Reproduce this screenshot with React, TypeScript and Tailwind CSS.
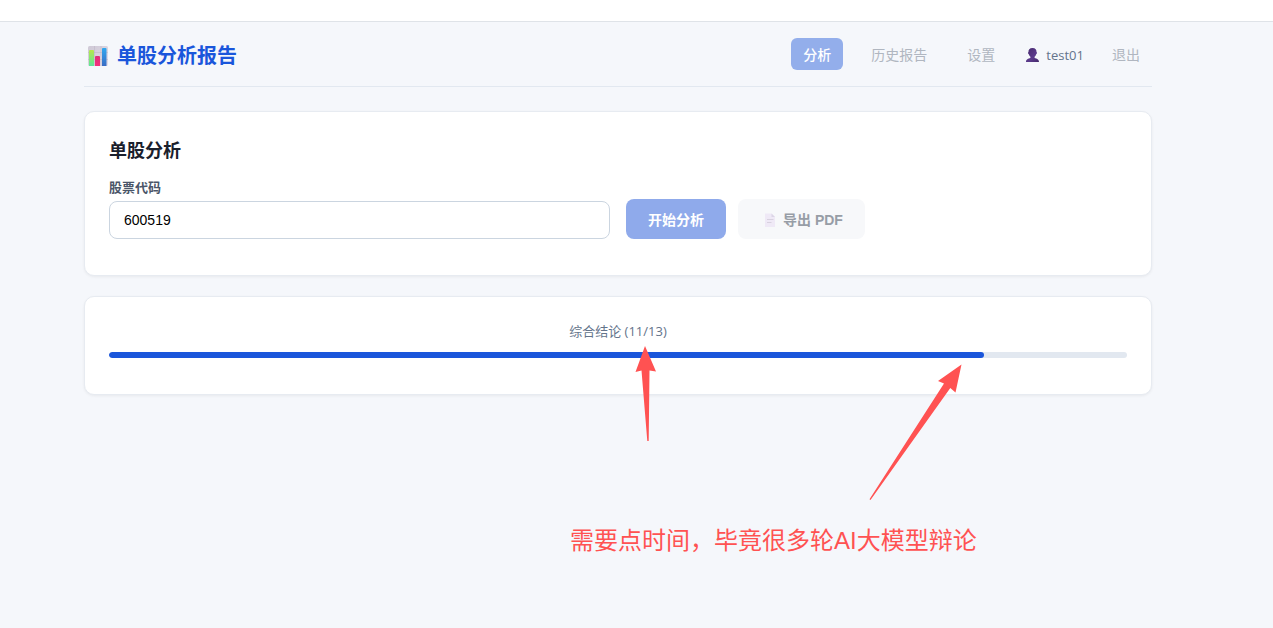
import { useState } from "react";

const navItems = [
  { label: "分析", active: true },
  { label: "历史报告", active: false },
  { label: "设置", active: false },
];

function ChartIcon() {
  return (
    <svg width="21" height="20" viewBox="0 0 21 20" aria-hidden="true">
      <defs>
        <linearGradient id="chartBack" x1="0" y1="0" x2="1" y2="1">
          <stop offset="0" stopColor="#cfc9d6" />
          <stop offset="1" stopColor="#e3dde8" />
        </linearGradient>
        <linearGradient id="chartGreen" x1="0" y1="0" x2="0" y2="1">
          <stop offset="0" stopColor="#b5e84c" />
          <stop offset="1" stopColor="#5fe49a" />
        </linearGradient>
        <linearGradient id="chartRed" x1="0" y1="0" x2="0" y2="1">
          <stop offset="0" stopColor="#dc2f78" />
          <stop offset="1" stopColor="#f52f7c" />
        </linearGradient>
        <linearGradient id="chartBlue" x1="0" y1="0" x2="0" y2="1">
          <stop offset="0" stopColor="#2fa8f0" />
          <stop offset="1" stopColor="#3a6cc4" />
        </linearGradient>
      </defs>
      <rect width="20" height="20" rx="1.5" fill="url(#chartBack)" />
      <path d="M0 6.5H20M0 13.5H20M6.5 0V20M13 0V20" stroke="#b3acbd" strokeWidth="0.4" />
      <path d="M1 20V5Q1 4 2 4H5Q6 4 6 5V20Z" fill="url(#chartGreen)" />
      <path d="M7 20V11Q7 10 8 10H11Q12 10 12 11V20Z" fill="url(#chartRed)" />
      <path d="M14 20V3Q14 2 15 2H17.500Q18.500 2 18.500 3V20Z" fill="url(#chartBlue)" />
    </svg>
  );
}

function UserIcon() {
  return (
    <svg width="19" height="16" viewBox="0 0 19 16" aria-hidden="true">
      <defs>
        <linearGradient id="userFill" x1="0" y1="0" x2="1" y2="1">
          <stop offset="0" stopColor="#45286c" />
          <stop offset="0.6" stopColor="#5b3a8c" />
          <stop offset="1" stopColor="#432869" />
        </linearGradient>
      </defs>
      <path
        d="M9.500 1C12.500 1 13.700 2.800 13.500 5C14.300 5.200 14.100 7 13.200 7.300C12.900 8.500 12.300 9.300 11.600 9.800V11C13.800 11.500 16 12.300 16 15H3C3 12.300 5.200 11.500 7.400 11V9.800C6.700 9.300 6.100 8.500 5.800 7.300C4.900 7 4.700 5.200 5.500 5C5.300 2.800 6.500 1 9.500 1Z"
        fill="url(#userFill)"
      />
    </svg>
  );
}

function PageIcon() {
  return (
    <svg width="19" height="16" viewBox="0 0 19 16" aria-hidden="true">
      <path d="M5 1.500H11.500L15 5V15H5Z" fill="#efe9f6" />
      <path d="M11.500 1.500L15 5H11.500Z" fill="#dcd5e6" />
      <path d="M7 7.500H13.500M7 10.500H11.500" stroke="#d8d1df" />
    </svg>
  );
}

// Hand-drawn style notes lying over the page
function Annotations() {
  return (
    <div className="pointer-events-none absolute inset-0">
      <svg className="absolute left-[635px] top-[345px]" width="22" height="97" viewBox="0 0 22 97" aria-hidden="true">
        <path d="M10 1L21 26.500L14.500 25.500L13.700 96H12.300L6.500 25.500L0.500 27Z" fill="#ff5252" />
      </svg>
      <svg className="absolute left-[869px] top-[364px]" width="93" height="137" viewBox="0 0 93 137" aria-hidden="true">
        <path d="M92.500 0.500L86.500 28.500L81.300 24L1.500 136L0.500 135.300L75 19.500L69 17Z" fill="#ff5252" />
      </svg>
      <p className="absolute left-[570px] top-[523px] whitespace-nowrap font-['Liberation_Sans','Noto_Sans_CJK_SC',sans-serif] text-2xl leading-9 text-[#ff5252]">
        需要点时间，毕竟很多轮AI大模型辩论
      </p>
    </div>
  );
}

export default function App() {
  const [code, setCode] = useState("600519");
  const step = 11;
  const total = 13;
  // the bar runs slightly ahead of the finished steps
  const percent = Math.round(((step + 0.18) / total) * 100);

  return (
    <div className="relative min-h-screen bg-[#f5f7fb] font-['Open_Sans','Noto_Sans_CJK_SC',sans-serif] text-[#1f2937]">
      <div className="h-[22px] border-b border-[#dfe3e8] bg-white" />

      <div className="pr-[37px]">
        <div className="mx-auto max-w-[1100px] px-4">
          <header className="mb-6 flex items-center justify-between border-b border-[#e2e8f0] py-4">
            <h1 className="flex items-center gap-2 pt-1 pl-1 text-xl leading-7 font-bold text-[#1a56db]">
              <ChartIcon />
              单股分析报告
            </h1>

            <nav className="flex items-center gap-4 text-sm leading-5">
              {navItems.map((item) => (
                <button
                  key={item.label}
                  disabled
                  className={
                    item.active
                      ? "h-8 rounded-md bg-[#93aeeb] px-3 pt-0.5 font-medium text-white"
                      : "h-8 rounded-md px-3 pt-0.5 text-[#b0b6c0]"
                  }
                >
                  {item.label}
                </button>
              ))}
              <span className="flex items-center gap-1 pt-0.5 text-[13px] text-[#64748b]">
                <UserIcon />
                test01
              </span>
              <button disabled className="h-8 rounded-md px-3 pt-0.5 text-[#b0b6c0]">
                退出
              </button>
            </nav>
          </header>

          <main className="flex flex-col gap-5">
            <section className="rounded-[10px] border border-[#e7ebf1] bg-white px-6 pt-6 pb-9 shadow-[0_1px_3px_rgba(0,0,0,0.06)]">
              <h2 className="mb-3 text-lg leading-7 font-bold text-[#1a202c]">单股分析</h2>
              <div className="grid grid-cols-2 items-end gap-4">
                <div>
                  <label htmlFor="code" className="mb-1 block pt-px text-[13px] leading-5 font-semibold text-[#4a5568]">
                    股票代码
                  </label>
                  <input
                    id="code"
                    value={code}
                    onChange={(e) => setCode(e.target.value)}
                    className="block h-[38px] w-full rounded-lg border border-[#cbd5e0] bg-white px-3.5 font-['Liberation_Sans',sans-serif] text-sm text-black outline-none"
                  />
                </div>
                <div className="flex gap-3 text-sm font-bold">
                  <button disabled className="h-10 rounded-lg bg-[#8faaeb] px-[22px] pt-0.5 text-white">
                    开始分析
                  </button>
                  <button
                    disabled
                    className="flex h-10 items-center gap-1 rounded-lg bg-[#f7f8fa] px-[22px] pt-0.5 font-['Liberation_Sans','Noto_Sans_CJK_SC',sans-serif] text-[#979da6]"
                  >
                    <PageIcon />
                    导出 PDF
                  </button>
                </div>
              </div>
            </section>

            <section className="rounded-[10px] border border-[#e7ebf1] bg-white px-6 pt-6 pb-9 shadow-[0_1px_3px_rgba(0,0,0,0.06)]">
              <p className="mb-[11px] text-center text-[13px] leading-5 text-[#64748b]">
                综合结论 ({step}/{total})
              </p>
              <div
                role="progressbar"
                aria-label="综合结论"
                aria-valuenow={percent}
                aria-valuemin={0}
                aria-valuemax={100}
                className="h-1.5 overflow-hidden rounded-full bg-[#e2e8f0]"
              >
                <div className="h-full rounded-full bg-[#1a56db]" style={{ width: `${percent}%` }} />
              </div>
            </section>
          </main>
        </div>
      </div>

      <Annotations />
    </div>
  );
}
